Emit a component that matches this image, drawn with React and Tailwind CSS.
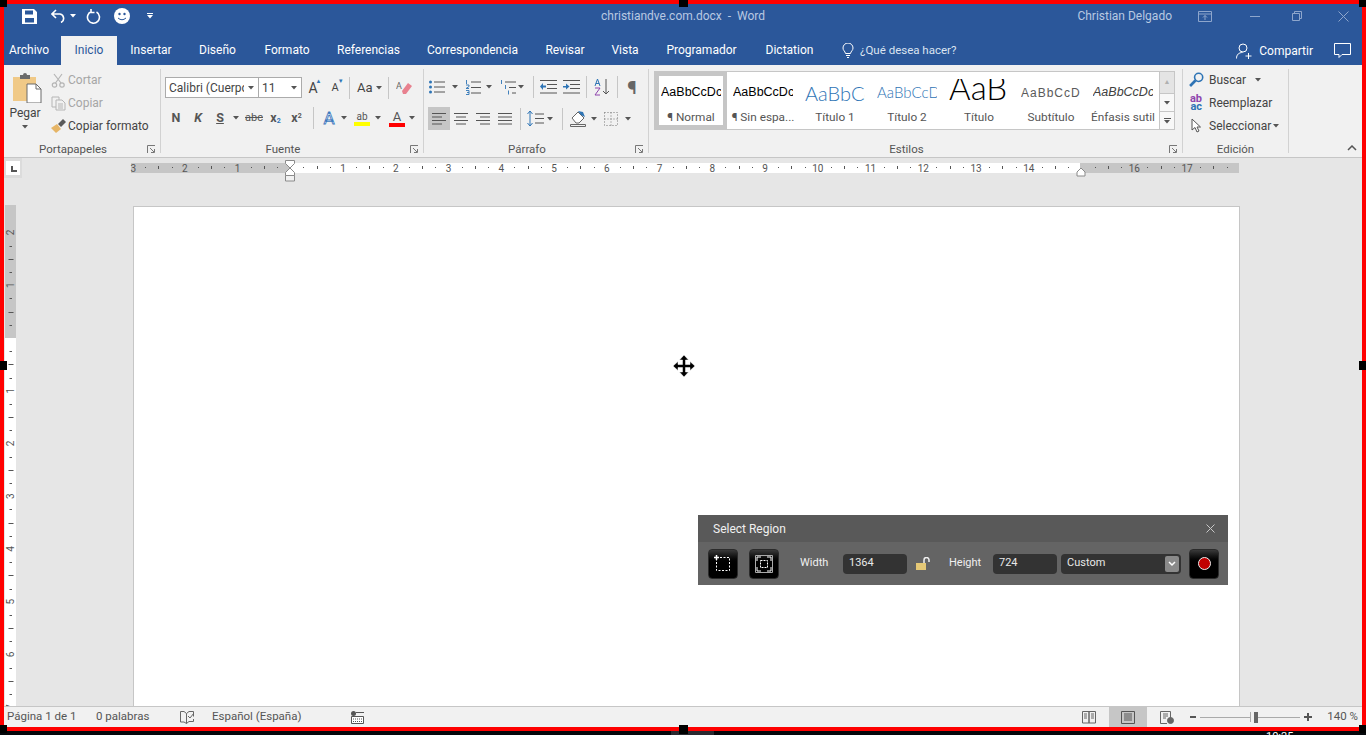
import { Fragment } from 'react';

const tabs = [
    ['Archivo', 'w-[57px] justify-start pl-[5px]'],
    ['Inicio', 'w-[56px] justify-center'],
    ['Insertar', 'w-[68px] justify-center'],
    ['Diseño', 'w-[65px] justify-center'],
    ['Formato', 'w-[74px] justify-center'],
    ['Referencias', 'w-[89px] justify-center'],
    ['Correspondencia', 'w-[119px] justify-center'],
    ['Revisar', 'w-[66px] justify-center'],
    ['Vista', 'w-[54px] justify-center'],
    ['Programador', 'w-[99px] justify-center'],
    ['Dictation', 'w-[77px] justify-center'],
];

const styleCells = [
    { label: '¶ Normal', sample: 'AaBbCcDc', cls: "font-['Liberation_Sans',sans-serif] text-[12.5px] text-black", selected: true },
    { label: '¶ Sin espa...', sample: 'AaBbCcDc', cls: "font-['Liberation_Sans',sans-serif] text-[12.5px] text-black" },
    { label: 'Título 1', sample: 'AaBbCc', cls: "font-['Lato',sans-serif] font-light text-[20px] text-[#2e74b5]" },
    { label: 'Título 2', sample: 'AaBbCcD', cls: "font-['Lato',sans-serif] font-light text-[15px] text-[#2e74b5]" },
    { label: 'Título', sample: 'AaB', cls: "-mt-[6px] block h-[21px] overflow-hidden font-['Lato',sans-serif] font-light text-[33px] leading-[17px] text-black" },
    { label: 'Subtítulo', sample: 'AaBbCcD', cls: "font-['Liberation_Sans',sans-serif] text-[12px] tracking-[1px] text-[#5a5a5a]" },
    { label: 'Énfasis sutil', sample: 'AaBbCcDc', cls: "font-['Liberation_Sans',sans-serif] italic text-[12.5px] text-[#404040]" },
];

function Caret({ color = '#555' }) {
    return (
        <svg width="6" height="4" viewBox="0 0 6 4" className="shrink-0">
            <path d="M0 0h6L3 3.5z" fill={color} />
        </svg>
    );
}

// fixed width slot so the icons land on the ribbon's grid
function Slot({ w, ml, active, children }) {
    return (
        <span className={`flex h-full shrink-0 items-center justify-center ${w} ${ml || ''} ${active ? 'bg-[#c6c6c6]' : ''}`}>
            {children}
        </span>
    );
}

function Sep({ ml }) {
    return <span className={`h-[22px] w-px shrink-0 bg-[#c6c6c6] ${ml}`} />;
}

function Group({ label, w, launcher = true, children }) {
    return (
        <div className={`flex h-[84px] shrink-0 flex-col border-r border-[#d2d2d2] ${w}`}>
            <div className="flex-1">{children}</div>
            <div className={`grid h-[14px] text-[11.5px] leading-[20px] text-[#555] ${launcher ? 'grid-cols-[1fr_18px]' : 'grid-cols-1'}`}>
                <span className="text-center">{label}</span>
                {launcher && (
                    <span className="flex h-[20px] items-center pl-[5px]">
                        <svg width="9" height="9" viewBox="0 0 9 9" fill="none" stroke="#777">
                            <path d="M.5 8V.5H8M3 3l4 4M7.5 4v3.5H4" />
                        </svg>
                    </span>
                )}
            </div>
        </div>
    );
}

function LinesIcon({ rows }) {
    return (
        <svg width="16" height="14" viewBox="0 0 16 14" stroke="#555" fill="none">
            {rows.map(([a, b], i) => (
                <path key={i} d={`M${a} ${1.5 + i * 3.5}H${b}`} />
            ))}
        </svg>
    );
}

function Portapapeles() {
    return (
        <Group label="Portapapeles" w="w-[157px]">
            <div className="flex">
                <div className="flex w-[42px] flex-col items-center pt-[4px]">
                    <svg width="30" height="30" viewBox="0 0 30 30" className="ml-[4px]">
                        <path d="M1 4h23v24H1z" fill="#f0c987" />
                        <path d="M8 2h3a2 2 0 0 1 4 0h3v4H8z" fill="#6b6b6b" />
                        <path d="M15 11h9l5 5v14H15z" fill="#fff" stroke="#6b6b6b" />
                        <path d="M24 11v5h5" fill="none" stroke="#6b6b6b" />
                    </svg>
                    <span className="mt-[2px] text-[12px] leading-[17px] text-[#444]">Pegar</span>
                    <span className="mt-[3px]"><Caret /></span>
                </div>
                <div className="ml-[3px] flex flex-col text-[12px] leading-[23px]">
                    <div className="flex h-[23px] items-center text-[#a6a6a6]">
                        <Slot w="w-[19px]">
                            <svg width="15" height="15" viewBox="0 0 15 15" fill="none" stroke="#b5b5b5" strokeWidth="1.2">
                                <circle cx="3.5" cy="12" r="2.2" />
                                <circle cx="11" cy="12" r="2.2" />
                                <path d="M4.5 10 11 1M10 10 3 1" />
                            </svg>
                        </Slot>
                        Cortar
                    </div>
                    <div className="flex h-[23px] items-center text-[#a6a6a6]">
                        <Slot w="w-[19px]">
                            <svg width="15" height="15" viewBox="0 0 15 15" fill="#f1f1f1" stroke="#b5b5b5">
                                <path d="M1 1h7v10H1z" />
                                <path d="M5 4h6l3 3v7H5zM7 8h5M7 10h5M7 12h5" />
                            </svg>
                        </Slot>
                        Copiar
                    </div>
                    <div className="flex h-[23px] items-center text-[#444]">
                        <Slot w="w-[19px]">
                            <svg width="16" height="15" viewBox="0 0 16 15">
                                <path d="M0 9 6 5l4 5-5 4z" fill="#e6b566" />
                                <path d="m7 5 5-5 3 3-5 5z" fill="#5a5a5a" />
                            </svg>
                        </Slot>
                        Copiar formato
                    </div>
                </div>
            </div>
        </Group>
    );
}

function Fuente() {
    return (
        <Group label="Fuente" w="w-[263px]">
            <div className="mt-[8px] flex h-[21px] items-center pl-[4px] text-[#444]">
                <div className="flex h-full w-[94px] items-center border border-[#ababab] bg-white pl-[3px] pr-[4px] text-[12px]">
                    <span className="w-[75px] overflow-hidden whitespace-nowrap">Calibri (Cuerpo</span>
                    <span className="ml-auto"><Caret /></span>
                </div>
                <div className="-ml-px flex h-full w-[44px] items-center border border-[#ababab] bg-white pl-[3px] pr-[4px] text-[12px]">
                    11
                    <span className="ml-auto"><Caret /></span>
                </div>
                <Slot w="w-[22px]">
                    <span className="relative text-[14px] leading-none">A<span className="absolute -right-[4px] -top-[3px] text-[6px] text-[#2e74b5]">▲</span></span>
                </Slot>
                <Slot w="w-[22px]">
                    <span className="relative text-[11px] leading-none">A<span className="absolute -right-[5px] -top-[4px] text-[6px] text-[#2e74b5]">▼</span></span>
                </Slot>
                <Sep ml="ml-[3px]" />
                <span className="ml-[7px] text-[13px]">Aa</span>
                <span className="ml-[3px]"><Caret /></span>
                <Sep ml="ml-[6px]" />
                <Slot w="w-[22px]" ml="ml-[4px]">
                    <svg width="16" height="16" viewBox="0 0 16 16">
                        <path d="m6 11 6-8 4 3-6 8H7z" fill="#e8818f" />
                        <text x="0" y="9" fontSize="9" fill="#666">A</text>
                    </svg>
                </Slot>
            </div>
            <div className="mt-[10px] flex h-[20px] items-center pl-[4px] text-[12.5px] font-bold text-[#555]">
                <Slot w="w-[22px]">N</Slot>
                <Slot w="w-[22px]"><span className="italic">K</span></Slot>
                <Slot w="w-[22px]"><span className="underline">S</span></Slot>
                <Slot w="w-[10px]"><Caret /></Slot>
                <Slot w="w-[22px]" ml="ml-[2px]"><span className="text-[11px] font-normal line-through">abc</span></Slot>
                <Slot w="w-[21px]"><span>x<sub className="text-[7px] text-[#2e74b5]">2</sub></span></Slot>
                <Slot w="w-[21px]"><span>x<sup className="text-[7px]">2</sup></span></Slot>
                <Sep ml="ml-[6px]" />
                <Slot w="w-[22px]" ml="ml-[4px]">
                    <span className="text-[17px] font-normal leading-none text-white [-webkit-text-stroke:0.8px_#3d78bd]">A</span>
                </Slot>
                <Slot w="w-[8px]"><Caret /></Slot>
                <Slot w="w-[22px]" ml="ml-[3px]">
                    <span className="flex flex-col items-center text-[10px] font-normal leading-[11px]">
                        ab
                        <span className="h-[4px] w-[16px] bg-[#ffff00]" />
                    </span>
                </Slot>
                <Slot w="w-[8px]" ml="ml-px"><Caret /></Slot>
                <Slot w="w-[22px]" ml="ml-[4px]">
                    <span className="flex flex-col items-center text-[13px] font-normal leading-[13px]">
                        A
                        <span className="h-[4px] w-[16px] bg-[#ff0000]" />
                    </span>
                </Slot>
                <Slot w="w-[8px]"><Caret /></Slot>
            </div>
        </Group>
    );
}

function Parrafo() {
    const dots = (
        <svg width="16" height="14" viewBox="0 0 16 14">
            <path d="M5 2h11M5 7h11M5 12h11" stroke="#555" />
            <circle cx="1.5" cy="2" r="1.5" fill="#2e74b5" />
            <circle cx="1.5" cy="7" r="1.5" fill="#2e74b5" />
            <circle cx="1.5" cy="12" r="1.5" fill="#2e74b5" />
        </svg>
    );
    const numbers = (
        <svg width="16" height="15" viewBox="0 0 16 15">
            <path d="M6 2h10M6 7.500h10M6 13h10" stroke="#555" />
            <path d="M1.500 0v4M1 5h3v1.500L1 8.500h3M1 10.500h3v4H1M2 12.500h2" stroke="#2e74b5" fill="none" strokeWidth=".9" />
        </svg>
    );
    const multi = (
        <svg width="16" height="15" viewBox="0 0 16 15">
            <path d="M5 2h11M9 7.500h7M12 13h4" stroke="#555" />
            <path d="M1.500 0v4M5.500 5v4M8.500 10.500v4" stroke="#2e74b5" strokeWidth=".9" />
        </svg>
    );
    const indent = (flip) => (
        <svg width="17" height="14" viewBox="0 0 17 14">
            <path d="M0 .5h17M7 4.500h10M7 8.500h10M0 13h17" stroke="#555" />
            <path d={flip ? 'M0 6h3V3.500L6.500 6.500 3 9.500V7.500H0z' : 'M6 5.500H3V3L0 6.500 3 10V7.500h3z'} fill="#2e74b5" />
        </svg>
    );
    return (
        <Group label="Párrafo" w="w-[225px]">
            <div className="mt-[6px] flex h-[24px] items-center">
                <Slot w="w-[20px]" ml="ml-[3px]">{dots}</Slot>
                <Slot w="w-[10px]" ml="ml-[3px]"><Caret /></Slot>
                <Slot w="w-[20px]" ml="ml-[3px]">{numbers}</Slot>
                <Slot w="w-[10px]" ml="ml-px"><Caret /></Slot>
                <Slot w="w-[20px]" ml="ml-[4px]">{multi}</Slot>
                <Slot w="w-[8px]" ml="-ml-px"><Caret /></Slot>
                <Sep ml="ml-[8px]" />
                <Slot w="w-[20px]" ml="ml-[4px]">{indent(false)}</Slot>
                <Slot w="w-[22px]" ml="ml-[2px]">{indent(true)}</Slot>
                <Sep ml="ml-[4px]" />
                <Slot w="w-[22px]" ml="ml-[4px]">
                    <svg width="16" height="18" viewBox="0 0 16 18" fill="none">
                        <path d="M1 8 3.500 1 6 8M1.800 5.500h3.400" stroke="#2e74b5" />
                        <path d="M1 10h5l-5 7h5" stroke="#8e44ad" />
                        <path d="M12 1v15M9 13l3 3 3-3" stroke="#555" />
                    </svg>
                </Slot>
                <Sep ml="ml-[4px]" />
                <Slot w="w-[22px]" ml="ml-[3px]">
                    <span className="text-[19px] font-bold leading-none text-[#666]">¶</span>
                </Slot>
            </div>
            <div className="mt-[8px] flex h-[23px] items-center">
                <Slot w="w-[22px]" ml="ml-[4px]" active><LinesIcon rows={[[1, 15], [1, 11], [1, 15], [1, 11]]} /></Slot>
                <Slot w="w-[22px]"><LinesIcon rows={[[1, 15], [3, 13], [1, 15], [3, 13]]} /></Slot>
                <Slot w="w-[22px]"><LinesIcon rows={[[1, 15], [5, 15], [1, 15], [5, 15]]} /></Slot>
                <Slot w="w-[22px]"><LinesIcon rows={[[1, 15], [1, 15], [1, 15], [1, 15]]} /></Slot>
                <Sep ml="ml-[4px]" />
                <Slot w="w-[20px]" ml="ml-[4px]">
                    <svg width="17" height="17" viewBox="0 0 17 17" fill="none">
                        <path d="M3 1v15M.5 4 3 1l2.500 3M.5 13 3 16l2.500-3" stroke="#2e74b5" />
                        <path d="M8 4h9M8 8.500h9M8 13h9" stroke="#555" />
                    </svg>
                </Slot>
                <Slot w="w-[8px]" ml="ml-px"><Caret /></Slot>
                <Sep ml="ml-[8px]" />
                <Slot w="w-[22px]" ml="ml-[4px]">
                    <svg width="17" height="17" viewBox="0 0 17 17" fill="none">
                        <path d="m2 8 6-6 6 6-5 5H6z" fill="#fff" stroke="#666" />
                        <path d="M8 1 11 5 15 7l-2-5z" fill="#2e74b5" />
                        <path d="M.5 14.500h15v2H.5z" stroke="#666" />
                    </svg>
                </Slot>
                <Slot w="w-[8px]" ml="ml-px"><Caret /></Slot>
                <Slot w="w-[20px]" ml="ml-[3px]">
                    <svg width="14" height="14" viewBox="0 0 14 14" fill="none" stroke="#777" strokeDasharray="1 2">
                        <path d="M.5.500h13v13H.500zM7 .5v13M.5 7h13" />
                    </svg>
                </Slot>
                <Slot w="w-[8px]" ml="ml-[3px]"><Caret /></Slot>
            </div>
        </Group>
    );
}

function StyleCell({ cell }) {
    return (
        <div className={`flex h-[57px] w-[72px] shrink-0 flex-col items-center border-[4px] bg-white ${cell.selected ? 'border-[#c6c6c6]' : 'border-white'}`}>
            <div className="flex h-[33px] w-[60px] shrink-0 items-center overflow-hidden whitespace-nowrap">
                <span className={cell.cls}>{cell.sample}</span>
            </div>
            <span className="whitespace-nowrap text-[11.8px] leading-[16px] text-[#555]">{cell.label}</span>
        </div>
    );
}

function Estilos() {
    return (
        <Group label="Estilos" w="w-[534px]">
            <div className="ml-[5px] mt-[2px] flex h-[59px] w-[521px] border border-[#c6c6c6] bg-white">
                {styleCells.map((cell) => (
                    <StyleCell key={cell.label} cell={cell} />
                ))}
                <div className="ml-auto flex w-[15px] flex-col border-l border-[#c6c6c6] bg-[#f8f8f8]">
                    <span className="flex h-[21px] items-center justify-center bg-[#e4e4e4] text-[7px] text-[#b0b0b0]">▲</span>
                    <span className="flex h-[19px] items-center justify-center border-y border-[#c6c6c6]"><Caret /></span>
                    <span className="flex flex-1 flex-col items-center justify-center gap-[1px]">
                        <span className="h-px w-[7px] bg-[#555]" />
                        <Caret />
                    </span>
                </div>
            </div>
        </Group>
    );
}

function Edicion() {
    return (
        <Group label="Edición" w="w-[106px]" launcher={false}>
            <div className="-mt-px flex flex-col text-[12px] text-[#444]">
                <div className="flex h-[23px] items-center">
                    <Slot w="w-[26px]">
                        <svg width="15" height="15" viewBox="0 0 14 14" fill="none" stroke="#2e74b5" strokeWidth="1.500">
                            <circle cx="9" cy="5" r="3.800" />
                            <path d="M6 8 1 13" strokeWidth="2.500" />
                        </svg>
                    </Slot>
                    Buscar
                    <span className="ml-[9px]"><Caret /></span>
                </div>
                <div className="flex h-[23px] items-center">
                    <Slot w="w-[26px]">
                        <span className="flex flex-col items-end text-[11px] font-bold leading-[8px]">
                            <span className="text-[#8e44ad]">ab</span>
                            <span className="text-[#2e74b5]">ac</span>
                        </span>
                    </Slot>
                    Reemplazar
                </div>
                <div className="flex h-[23px] items-center">
                    <Slot w="w-[26px]">
                        <svg width="10" height="15" viewBox="0 0 10 15" fill="#fff" stroke="#555">
                            <path d="M1 1v11l3-2.500 2 4.500 2-1-2-4h3.500z" />
                        </svg>
                    </Slot>
                    Seleccionar
                    <span className="ml-[2px]"><Caret /></span>
                </div>
            </div>
        </Group>
    );
}

function HRuler() {
    const cm = 52.75;
    const zero = 160.25;
    const ticks = [];
    for (let i = -3; i <= 18; i++) {
        const x = zero + i * cm;
        if (i !== 0 && i !== 15 && i !== 18) {
            ticks.push(
                <text key={`t${i}`} x={i === -3 ? 0.5 : x} y="8.500" fontSize="10" textAnchor={i === -3 ? 'start' : 'middle'} fill="#555">
                    {Math.abs(i)}
                </text>,
            );
        }
        if (i < 18) {
            ticks.push(<path key={`a${i}`} d={`M${Math.round(x + cm / 4)} 4.500h1`} stroke="#555" />);
            ticks.push(<path key={`b${i}`} d={`M${Math.round(x + cm / 2) + 0.5} 3v3`} stroke="#555" />);
            ticks.push(<path key={`c${i}`} d={`M${Math.round(x + (3 * cm) / 4)} 4.500h1`} stroke="#555" />);
        }
    }
    return (
        <svg width="1109" height="24" viewBox="0 -3 1109 24">
            <rect x="1" y="0" width="1108" height="10" fill="#c6c6c6" />
            <rect x="160" y="0" width="790" height="10" fill="#fff" />
            {ticks}
            <path d="M155.500-2.500h9v3l-4.500 4.500-4.500-4.500z" fill="#fff" stroke="#8a8a8a" />
            <path d="M155.500 12.500v-3l4.500-4.500 4.500 4.500v3z" fill="#fff" stroke="#8a8a8a" />
            <path d="M155.500 12.500h9v5.500h-9z" fill="#f1f1f1" stroke="#8a8a8a" />
            <path d="m947 9 4-4 4 4v4h-8z" fill="#fff" stroke="#8a8a8a" />
        </svg>
    );
}

function VRuler() {
    const cm = 52.75;
    const zero = 133;
    const marks = [];
    for (let i = -2; i <= 7; i++) {
        const y = zero + i * cm;
        if (i !== 0) {
            marks.push(
                <text key={`t${i}`} x="5.500" y={y} fontSize="10" textAnchor="middle" dominantBaseline="central" fill="#555" transform={`rotate(-90 5.500 ${y})`}>
                    {Math.abs(i)}
                </text>,
            );
        }
        marks.push(<path key={`a${i}`} d={`M4.500 ${Math.round(y + cm / 4) + 0.5}h2.500`} stroke="#555" />);
        marks.push(<path key={`b${i}`} d={`M3.500 ${Math.round(y + cm / 2) + 0.5}h5`} stroke="#555" />);
        marks.push(<path key={`c${i}`} d={`M4.500 ${Math.round(y + (3 * cm) / 4) + 0.5}h2.500`} stroke="#555" />);
    }
    return (
        <svg width="11" height="502" viewBox="0 0 11 502" className="shrink-0">
            <rect width="11" height="502" fill="#fff" />
            <rect width="11" height="133" fill="#c6c6c6" />
            {marks}
        </svg>
    );
}

function SelectRegion() {
    const btn = 'flex h-[30px] w-[30px] shrink-0 items-center justify-center rounded-[4px] border border-[#2b2b2b] bg-gradient-to-b from-[#3a3a3a] via-black to-black';
    const input = 'flex h-[20px] items-center rounded-[4px] bg-[#333] pl-[6px] text-[11px] text-[#e8e8e8]';
    return (
        <div className="absolute left-[698px] top-[515px] flex h-[70px] w-[530px] flex-col bg-[#646464] font-['Roboto',sans-serif] text-[#f0f0f0]">
            <div className="flex h-[27px] shrink-0 items-center justify-between bg-[#595959] pl-[15px] pr-[13px] text-[12px]">
                Select Region
                <svg width="9" height="9" viewBox="0 0 9 9" stroke="#c8c8c8"><path d="m.5.500 8 8M8.500.500l-8 8" /></svg>
            </div>
            <div className="flex flex-1 items-center pl-[10px] text-[11px]">
                <span className={btn}>
                    <svg width="20" height="20" viewBox="0 0 20 20" fill="none" stroke="#fff">
                        <path d="M3.500 3.500h13v13h-13z" strokeDasharray="2 1.500" />
                        <path d="M3.500 1v5M1 3.500h5" strokeWidth="1.500" />
                    </svg>
                </span>
                <span className={`ml-[11px] ${btn}`}>
                    <svg width="20" height="20" viewBox="0 0 20 20" fill="none">
                        <path d="M1.500 1.500h17v17h-17z" stroke="#aaa" />
                        <path d="M3 7V3h4M13 3h4v4M17 13v4h-4M7 17H3v-4" stroke="#fff" />
                        <path d="M6.500 6.500h7v7h-7z" strokeDasharray="2 1" stroke="#fff" />
                    </svg>
                </span>
                <span className="ml-[21px] w-[43px]">Width</span>
                <span className={`w-[64px] ${input}`}>1364</span>
                <span className="ml-[9px] flex w-[16px] justify-center">
                    <svg width="16" height="13" viewBox="0 0 16 13" fill="none">
                        <path d="M0 6h10v7H0z" fill="#e5c876" />
                        <path d="M8 6V3a2.500 2.500 0 0 1 5 0v2" stroke="#f0f0f0" strokeWidth="1.500" />
                    </svg>
                </span>
                <span className="ml-[17px] w-[44px]">Height</span>
                <span className={`w-[64px] ${input}`}>724</span>
                <span className={`ml-[4px] w-[120px] pr-[2px] ${input}`}>
                    Custom
                    <span className="ml-auto flex h-[16px] w-[14px] items-center justify-center rounded-[2px] bg-[#8a8a8a]">
                        <svg width="8" height="6" viewBox="0 0 8 6" fill="none" stroke="#fff" strokeWidth="1.500"><path d="m1 1 3 3 3-3" /></svg>
                    </span>
                </span>
                <span className={`ml-[8px] ${btn}`}>
                    <span className="h-[13px] w-[13px] rounded-full border border-[#eee] bg-[#c00000]" />
                </span>
            </div>
        </div>
    );
}

function Frame() {
    const handle = 'absolute bg-black';
    return (
        <Fragment>
            <div className="absolute left-0 top-0 h-[4px] w-full bg-[#ff0000]" />
            <div className="absolute left-0 top-0 h-[731px] w-[4px] bg-[#ff0000]" />
            <div className="absolute right-0 top-0 h-[731px] w-[4px] bg-[#ff0000]" />
            <div className="absolute left-0 top-[727px] h-[4px] w-full bg-[#ff0000]" />
            <div className={`${handle} left-0 top-0 h-[7px] w-[7px]`} />
            <div className={`${handle} left-[679px] top-0 h-[7px] w-[9px]`} />
            <div className={`${handle} right-0 top-0 h-[7px] w-[7px]`} />
            <div className={`${handle} left-0 top-[361px] h-[9px] w-[7px]`} />
            <div className={`${handle} right-0 top-[361px] h-[9px] w-[7px]`} />
            <div className={`${handle} left-0 top-[725px] h-[8px] w-[7px]`} />
            <div className={`${handle} left-[679px] top-[725px] h-[9px] w-[9px]`} />
            <div className={`${handle} right-0 top-[725px] h-[8px] w-[7px]`} />
        </Fragment>
    );
}

export default function App() {
    return (
        <div className="relative h-[735px] w-[1366px] overflow-hidden bg-[#05080c] font-['Roboto',sans-serif]">
            <div className="flex h-[727px] flex-col">
                {/* title bar */}
                <div className="relative flex h-[36px] shrink-0 items-center bg-[#2b579a] pb-[4px] pl-[22px] text-[12px] text-[#b9c9e2]">
                    <svg width="15" height="15" viewBox="0 0 15 15" fill="#fff">
                        <path fillRule="evenodd" d="M0 0h12l3 3v12H0zM3 1.500v4h8v-4zM3 9v4.500h9V9z" />
                    </svg>
                    <svg width="15" height="14" viewBox="0 0 15 14" fill="none" stroke="#fff" strokeWidth="1.600" className="ml-[14px]">
                        <path d="M5 1 1 5l4 4M1 5h8a4.500 4.500 0 0 1 1 8.500" />
                    </svg>
                    <span className="ml-[4px]"><Caret color="#fff" /></span>
                    <svg width="15" height="15" viewBox="0 0 15 15" fill="none" stroke="#fff" strokeWidth="1.600" className="ml-[10px]">
                        <path d="M5.500 2.500a6 6 0 1 0 5 .5M5 0v3.500h3.500" />
                    </svg>
                    <svg width="16" height="16" viewBox="0 0 16 16" className="ml-[13px]">
                        <circle cx="8" cy="8" r="8" fill="#fff" />
                        <circle cx="5.500" cy="6" r="1.200" fill="#2b579a" />
                        <circle cx="10.500" cy="6" r="1.200" fill="#2b579a" />
                        <path d="M4 10q4 3.500 8 0" fill="none" stroke="#2b579a" />
                    </svg>
                    <span className="ml-[17px] flex flex-col items-center gap-[1px]">
                        <span className="h-px w-[6px] bg-white" />
                        <Caret color="#fff" />
                    </span>
                    <span className="absolute left-[601px] whitespace-nowrap">christiandve.com.docx&nbsp; -&nbsp; Word</span>
                    <div className="ml-auto flex items-center">
                        <span className="whitespace-nowrap">Christian Delgado</span>
                        <svg width="14" height="11" viewBox="0 0 14 11" fill="none" stroke="#8ea6cc" className="ml-[26px]">
                            <path d="M.5.500h13v10H.500zM.5 3h13M7 9V4.500M5 6.500l2-2 2 2" />
                        </svg>
                        <span className="ml-[38px] h-px w-[10px] bg-[#8ea6cc]" />
                        <svg width="10" height="10" viewBox="0 0 10 10" fill="none" stroke="#8ea6cc" className="ml-[32px]">
                            <path d="M.5 2.500h7v7h-7zM2.500 2.500v-2h7v7h-2" />
                        </svg>
                        <svg width="11" height="11" viewBox="0 0 11 11" stroke="#8ea6cc" className="ml-[36px] mr-[17px]">
                            <path d="m.5.500 10 10M10.500.500l-10 10" />
                        </svg>
                    </div>
                </div>

                {/* tabs */}
                <div className="flex h-[29px] shrink-0 items-center bg-[#2b579a] pl-[4px] text-[12px] text-white">
                    {tabs.map(([name, w]) => (
                        <span
                            key={name}
                            className={`flex h-full items-center pb-px ${w} ${name === 'Inicio' ? 'bg-[#f1f1f1] text-[#2b579a]' : ''}`}
                        >
                            {name}
                        </span>
                    ))}
                    <svg width="12" height="15" viewBox="0 0 12 15" fill="none" stroke="#fff" className="ml-[14px]">
                        <path d="M3.500 10.500C3 8 1 7.500 1 5a5 5 0 0 1 10 0c0 2.500-2 3-2.500 5.500zM4 12.500h4M5 14.500h2" />
                    </svg>
                    <span className="ml-[6px] text-[11.5px] text-[#dbe4f1]">¿Qué desea hacer?</span>
                    <div className="ml-auto flex items-center">
                        <svg width="16" height="16" viewBox="0 0 16 16" fill="none" stroke="#fff">
                            <circle cx="7" cy="5" r="4" />
                            <path d="M.5 15.500c0-4 2.500-6 6-6M9.500 13h6M12.500 10v6" />
                        </svg>
                        <span className="ml-[7px]">Compartir</span>
                        <svg width="17" height="15" viewBox="0 0 17 15" fill="none" stroke="#fff" className="ml-[21px] mr-[15px]">
                            <path d="M.5.500h16v11H8l-3 3v-3H.5z" />
                        </svg>
                    </div>
                </div>

                {/* ribbon */}
                <div className="flex h-[93px] shrink-0 border-b border-[#c6c6c6] bg-[#f1f1f1] pl-[4px] pt-[4px]">
                    <Portapapeles />
                    <Fuente />
                    <Parrafo />
                    <Estilos />
                    <Edicion />
                    <div className="flex flex-1 items-end justify-end pb-[6px] pr-[9px]">
                        <svg width="10" height="6" viewBox="0 0 10 6" fill="none" stroke="#555" strokeWidth="1.500">
                            <path d="m1 5 4-4 4 4" />
                        </svg>
                    </div>
                </div>

                {/* document area */}
                <div className="flex min-h-0 flex-1 flex-col bg-[#e6e6e6]">
                    <div className="flex h-[47px] shrink-0 items-start pl-[4px]">
                        <div className="flex h-[20px] w-[18px] items-center justify-center bg-[#dcdcdc]">
                            <span className="flex h-[14px] w-[14px] items-end justify-center bg-white pb-[3px] pl-[2px]">
                                <span className="h-[6px] w-[6px] border-b-2 border-l-2 border-[#555]" />
                            </span>
                        </div>
                        <div className="ml-[108px] mt-[2px]"><HRuler /></div>
                    </div>
                    <div className="flex min-h-0 flex-1 pl-[5px]">
                        <VRuler />
                        <div className="ml-[117px] mt-px w-[1107px] border-x border-t border-[#c6c6c6] bg-white" />
                    </div>
                </div>

                {/* status bar */}
                <div className="flex h-[21px] shrink-0 items-center border-t border-[#c6c6c6] bg-[#f1f1f1] pl-[7px] text-[11.5px] text-[#555]">
                    <span className="w-[89px]">Página 1 de 1</span>
                    <span className="w-[84px]">0 palabras</span>
                    <svg width="14" height="13" viewBox="0 0 14 13" fill="none" stroke="#666">
                        <path d="M.5.500H4l2.500 2v10L4 11H.5zM6.500 2.500 9 .5h4.500v5M6.500 12.500 9 10.500h4.500V8M8 5l2 2 4-5" />
                    </svg>
                    <span className="ml-[18px] w-[139px]">Español (España)</span>
                    <svg width="13" height="13" viewBox="0 0 13 13" fill="none">
                        <circle cx="2.500" cy="2.500" r="2.500" fill="#555" />
                        <path d="M5 1.500h8" stroke="#555" />
                        <path d="M.5 5.500h12v7H.5z" fill="#fff" stroke="#555" />
                        <path d="M2 8h9M2 10.500h9" stroke="#555" strokeDasharray="1 1" />
                    </svg>
                    <div className="ml-auto flex h-full items-center pr-[8px]">
                        <svg width="14" height="13" viewBox="0 0 14 13" fill="#f1f1f1" stroke="#666">
                            <path d="M.5.500H7v11.500H.5zM7 .5h6.500v11.500H7zM2 3h3M2 5h3M2 7h3M9 3h3M9 5h3M9 7h3" />
                        </svg>
                        <span className="ml-[13px] flex h-full w-[38px] items-center justify-center bg-[#c6c6c6]">
                            <svg width="14" height="13" viewBox="0 0 14 13" fill="none" stroke="#555">
                                <path d="M.5.500h13v12H.500zM3 3h8M3 5h8M3 7h8M3 9h8" />
                            </svg>
                        </span>
                        <svg width="14" height="13" viewBox="0 0 14 13" fill="none" stroke="#666" className="ml-[13px]">
                            <path d="M.5.500h10v8M.5.500v12H7M3 3h5M3 5h5M3 7h3" />
                            <circle cx="10.500" cy="9.500" r="3" fill="#666" />
                        </svg>
                        <span className="ml-[16px] h-[2px] w-[6px] bg-[#555]" />
                        <span className="ml-[4px] flex h-[10px] w-[100px] items-center">
                            <span className="h-px w-[50px] bg-[#aaa]" />
                            <span className="h-[10px] w-px bg-[#aaa]" />
                            <span className="ml-[3px] h-[11px] w-[4px] bg-[#666]" />
                            <span className="h-px flex-1 bg-[#aaa]" />
                        </span>
                        <span className="relative ml-[4px] h-[8px] w-[8px]">
                            <span className="absolute left-0 top-[3px] h-[2px] w-[8px] bg-[#555]" />
                            <span className="absolute left-[3px] top-0 h-[8px] w-[2px] bg-[#555]" />
                        </span>
                        <span className="ml-[15px]">140 %</span>
                    </div>
                </div>
            </div>

            {/* clipped bits of the desktop under the capture frame */}
            <span className="absolute left-[671px] top-[731px] h-[4px] w-[43px] bg-[#2a2a30]" />
            <span className="absolute left-[1266px] top-[731px] text-[11px] leading-[12px] text-white">10:25</span>

            <Frame />
            <SelectRegion />

            {/* move cursor */}
            <svg width="22" height="22" viewBox="0 0 22 22" className="absolute left-[673px] top-[355px]">
                <path d="M11 0 6.500 5h3v4.500H5v-3L0 11l5 4.500v-3h4.500V17h-3l4.500 5 4.500-5h-3v-4.500H17v3l5-4.500-5-4.500v3h-4.500V5h3z" fill="#000" stroke="#fff" strokeWidth=".5" />
            </svg>
        </div>
    );
}
